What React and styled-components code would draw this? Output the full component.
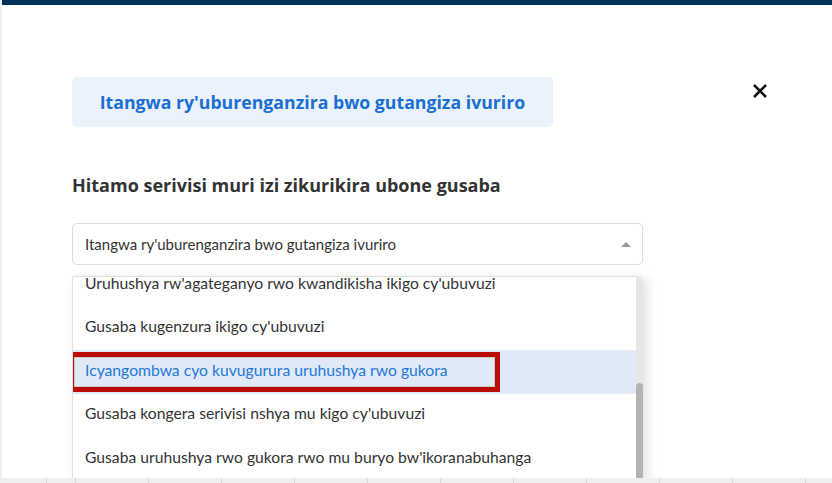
import React, { useCallback } from 'react';
import styled, { createGlobalStyle } from 'styled-components';

const GlobalStyle = createGlobalStyle`
  html, body {
    margin: 0;
    padding: 0;
    height: 100%;
  }

  body {
    background: #eeeeee;
    font-family: Lato, "Open Sans", sans-serif;
    overflow: hidden;
  }
`;

const Backdrop = styled.div`
  width: 832px;
  height: 483px;
  display: flex;
  flex-direction: column;
  background:
    repeating-linear-gradient(90deg, #d9d9d9 0 1px, transparent 1px 73px) 75px 0 / 100% 100%,
    #efefef;
`;

const Modal = styled.section`
  margin-left: 2px;
  height: 478px;
  background: #fff;
  border-top: 5px solid #00325a;
  box-sizing: border-box;
  padding: 72px 64px 0 70px;
  overflow: hidden;
  display: flex;
  flex-direction: column;
`;

const Header = styled.header`
  display: flex;
  justify-content: space-between;
  align-items: flex-start;
  flex-shrink: 0;
`;

const TitleBox = styled.div`
  width: 481px;
  height: 50px;
  display: flex;
  align-items: center;
  justify-content: center;
  background: #eaf2fb;
  border-radius: 5px;
  color: #1b6fd2;
  font-family: "Open Sans", Lato, sans-serif;
  font-size: 17.7px;
  font-weight: 700;
`;

const CloseButton = styled.button`
  margin-top: 6px;
  padding: 0;
  border: 0;
  background: none;
  width: 16px;
  height: 16px;
  display: flex;
  cursor: pointer;
`;

const Prompt = styled.h2`
  margin: 46px 0 0;
  flex-shrink: 0;
  font-family: "Open Sans", Lato, sans-serif;
  font-size: 18px;
  line-height: 24px;
  font-weight: 700;
  color: #333;
`;

const Field = styled.div`
  width: 571px;
  margin-top: 26px;
  flex-shrink: 0;
  display: flex;
  flex-direction: column;
  gap: 11px;
`;

const Select = styled.div`
  height: 42px;
  box-sizing: border-box;
  border: 1px solid #dcdcdc;
  border-radius: 5px;
  padding: 0 11px 0 12px;
  display: flex;
  align-items: center;
  justify-content: space-between;
  font-size: 15px;
  color: #333;
`;

const Caret = styled.span`
  width: 0;
  height: 0;
  border-left: 5px solid transparent;
  border-right: 5px solid transparent;
  border-bottom: 5px solid #9a9a9a;
`;

const Dropdown = styled.div`
  flex-shrink: 0;
  height: 204px;
  display: flex;
  border: 1px solid #e0e0e0;
  border-right: 0;
  border-radius: 2px 6px 0 0;
  box-shadow: 4px 2px 12px rgba(0, 0, 0, 0.12);
  overflow: hidden;
`;

const Options = styled.ul`
  flex: 1;
  margin: 0;
  padding: 0;
  list-style: none;
  overflow: hidden;
`;

const Option = styled.li`
  position: relative;
  height: 43.5px;
  box-sizing: border-box;
  display: flex;
  align-items: center;
  padding: 0 0 4px 12px;
  font-size: 15.7px;
  color: ${({ active }) => (active ? '#2477d6' : '#333')};
  background: ${({ active }) => (active ? '#dfeaf6' : '#fff')};
`;

const Marker = styled.span`
  position: absolute;
  left: -4px;
  top: 2px;
  width: 431px;
  height: 40px;
  box-sizing: border-box;
  border: 5px solid #bb0b0b;
  box-shadow: inset 0 0 0 1px #c4c9cf;
`;

const Track = styled.div`
  width: 7px;
  display: flex;
  flex-direction: column;
  justify-content: flex-end;
  background: #e6e6e6;
  border-radius: 0 5px 0 0;
`;

const Thumb = styled.div`
  height: 98px;
  background: #b3b3b3;
  border-radius: 4px 4px 0 0;
`;

const options = [
  "Uruhushya rw'agateganyo rwo kwandikisha ikigo cy'ubuvuzi",
  "Gusaba kugenzura ikigo cy'ubuvuzi",
  'Icyangombwa cyo kuvugurura uruhushya rwo gukora',
  "Gusaba kongera serivisi nshya mu kigo cy'ubuvuzi",
  "Gusaba uruhushya rwo gukora rwo mu buryo bw'ikoranabuhanga",
];

const selected = "Itangwa ry'uburenganzira bwo gutangiza ivuriro";

const App = () => {
  const scrolled = useCallback((node) => {
    if (node) node.scrollTop = 15;
  }, []);

  return (
    <>
      <GlobalStyle />
      <Backdrop>
        <Modal>
          <Header>
            <TitleBox>{selected}</TitleBox>
            <CloseButton aria-label="Close">
              <svg width="16" height="16" viewBox="0 0 16 16">
                <path d="M2 2 L14 14 M14 2 L2 14" stroke="#111" strokeWidth="2.6" />
              </svg>
            </CloseButton>
          </Header>

          <Prompt>Hitamo serivisi muri izi zikurikira ubone gusaba</Prompt>

          <Field>
            <Select>
              {selected}
              <Caret />
            </Select>
            <Dropdown>
              <Options ref={scrolled}>
                {options.map((label, i) => (
                  <Option key={label} active={i === 2}>
                    {label}
                    {i === 2 ? <Marker /> : null}
                  </Option>
                ))}
              </Options>
              <Track><Thumb /></Track>
            </Dropdown>
          </Field>
        </Modal>
      </Backdrop>
    </>
  );
};

export default App;
